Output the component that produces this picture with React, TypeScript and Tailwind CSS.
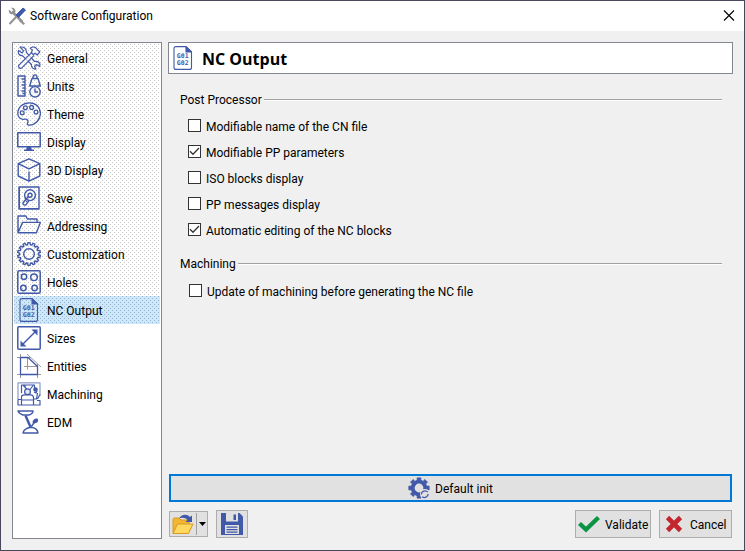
import React, { useState } from "react";

const BLUE = "#4159a9";

interface IconProps {
  children: React.ReactNode;
  width?: number;
}

const Icon: React.FC<IconProps> = ({ children, width = 1.3 }) => (
  <svg
    className="h-6 w-6 shrink-0"
    viewBox="0 0 24 24"
    fill="none"
    stroke={BLUE}
    strokeWidth={width}
    strokeLinejoin="round"
    aria-hidden="true"
  >
    {children}
  </svg>
);

const gearPath = (teeth: number, outer: number, inner: number, top = 0.2, base = 0.32) => {
  const points: string[] = [];
  const step = (Math.PI * 2) / teeth;
  for (let i = 0; i < teeth; i++) {
    const a = i * step - Math.PI / 2;
    [
      [-base, inner],
      [-top, outer],
      [top, outer],
      [base, inner],
    ].forEach(([t, r]) => {
      const x = 12 + Math.cos(a + t * step) * r;
      const y = 12 + Math.sin(a + t * step) * r;
      points.push(`${x.toFixed(2)} ${y.toFixed(2)}`);
    });
  }
  return `M${points.join("L")}Z`;
};

const GeneralIcon = () => (
  <Icon width={1.2}>
    <path d="M3 1.2 6.6 4.8 5.2 7 1.6 4.4C.6 7 2 9.8 5.4 9.6L14.5 18.5C14 21 16 23.5 19 23L17.5 20.5 19.5 18.5 22.5 20.5C24 17.5 21 14.5 17.5 15.5L9.2 6.2C9.8 2.6 6.6.4 3 1.2Z" />
    <path d="M13.2 2.2C16 .2 18.6.8 20 3.2l1.2 1.4 1.6 1.2-2.6 3.2-2-1.8-2 1.4-1.8-2.2L15.4 4ZM14.6 6.6 2 19.2c-1.6 1.6 1.2 4.2 2.8 2.6L17 9.4" fill="#fff" fillOpacity=".7" />
  </Icon>
);

const UnitsIcon = () => (
  <Icon width={1.4}>
    <path d="M1 2h7v20H1ZM4.5 5H8M5.5 8H8M4.5 11H8M5.5 14H8M4.5 17H8M5.5 19.5H8" />
    <path d="M15 4.5h6L23.3 12H12.7ZM16 4.5c-.8-4.8 4.8-4.8 4 0" />
    <circle cx="18" cy="17.8" r="5.2" fill="#f4f4f4" />
    <path d="M18 14.5V18h3" />
  </Icon>
);

const ThemeIcon = () => (
  <Icon>
    <path d="M12.5 23.2c-1.6.2-2.6-.8-1.8-2.6 1-2.2-.6-4-3.2-3.4C3.6 18 .8 15.4.8 11.4.8 5.4 6 .8 12.4.8S23.4 5 23.4 11.2c0 6.4-5 11.6-10.9 12Z" />
    <circle cx="5.2" cy="10.8" r="1.9" />
    <circle cx="8.4" cy="5.7" r="1.9" />
    <circle cx="14.6" cy="5.4" r="1.9" />
    <circle cx="19" cy="10" r="1.9" />
  </Icon>
);

const DisplayIcon = () => (
  <Icon width={1.5}>
    <path d="M.8 2.8h22.4v14H.8Z" />
    <path d="M10 17h4l.8 2.6H17v1.4H7v-1.4h2.2Z" fill={BLUE} stroke="none" />
  </Icon>
);

const CubeIcon = () => (
  <Icon width={1.4}>
    <path d="M12 .8 22.8 5.6V18L12 23.2 1.2 18V5.6ZM1.2 5.6 12 10.8l10.8-5.2M12 13.4V23" />
  </Icon>
);

const SaveIcon = () => (
  <Icon width={1.4}>
    <path d="M2 1h20v22H2Z" />
    <path d="M2.5 2v20.5h19" strokeWidth="1" />
    <circle cx="13" cy="9.2" r="5.4" />
    <circle cx="13" cy="9.2" r="2" />
    <path d="m11.5 10.6-5.4 5.8c-.8 1.6 1 3.4 2.8 2.4l3.4-5" />
    <path d="m8.2 14.4 2.4 2" strokeWidth="1" />
  </Icon>
);

const FolderIcon = () => (
  <Icon width={1.4}>
    <path d="M1 18.5V2h8l1.4 3H20v3M1 18.8 5.6 8.4h17.8L19.4 18.8H1Z" />
  </Icon>
);

const GearIcon = () => (
  <Icon width={1.4}>
    <path d={gearPath(14, 11.4, 9.4)} />
    <circle cx="12" cy="12" r="5.3" />
  </Icon>
);

const HolesIcon = () => (
  <Icon width={1.5}>
    <rect x=".8" y=".8" width="22.4" height="22.4" rx="1.5" />
    <circle cx="7" cy="6.8" r="2.7" />
    <circle cx="17" cy="7.2" r="3.3" />
    <circle cx="6.4" cy="18" r="2.7" />
    <circle cx="17.6" cy="18" r="2.7" />
  </Icon>
);

const NcIcon = () => (
  <Icon width={1.1}>
    <path d="M5 .6H15L20.5 6v15.4c0 1.2-.8 2-2 2H5c-1.2 0-2-.8-2-2V2.6c0-1.2.8-2 2-2Z" />
    <path d="M15 .6V6h5.5Z" fill={BLUE} />
    <text x="11.7" y="12" textAnchor="middle" fontSize="6.5" fontWeight="700" fill={BLUE} stroke="none" fontFamily="DejaVu Sans Mono, monospace">G01</text>
    <text x="11.7" y="19" textAnchor="middle" fontSize="6.5" fontWeight="700" fill={BLUE} stroke="none" fontFamily="DejaVu Sans Mono, monospace">G02</text>
  </Icon>
);

const SizesIcon = () => (
  <Icon width={1.5}>
    <rect x=".8" y=".8" width="22.4" height="22.4" rx="1" />
    <path d="M5 19 19 5" />
    <path d="M20.5 3.5v6L14.5 3.5ZM3.5 20.5v-6l6 6Z" fill={BLUE} stroke="none" />
  </Icon>
);

const EntitiesIcon = () => (
  <Icon>
    <path d="M0 3.5h14M3.5 0v24M0 20.5h24M20.5 10v14M10 0l14 13M10.5 3.5v12M7 12.5h13" stroke="#999" strokeWidth="1" />
    <path d="M3.5 3.5h7.5l9.5 9v8h-17Z" />
  </Icon>
);

const MachiningIcon = () => (
  <Icon width={1.2}>
    <path d="M1 17V.8h22V14" stroke="#8b99c9" />
    <path d="M4.5 11V3h13v3M6 3l4 4.5h3L16.5 3M8 3v3" />
    <circle cx="10.5" cy="9.8" r="2.9" fill="#e4e8f4" />
    <path d="M4.5 17.5H1V23h22v-4.5h-3M4.5 23v-8c0-1.5 1-2.2 3-2.2h6c2 0 3 1 3 3V23M4.5 18h12M17 17h2.5l1-6M23 12.5 20.5 17" />
    <circle cx="18.5" cy="7.5" r="1.7" fill={BLUE} />
    <path d="m17 10 2 1 1-2" />
  </Icon>
);

const EdmIcon = () => (
  <Icon width={1.4}>
    <path d="M1 1h15c0 1.6-1.8 3.2-4 4H6C3.6 4.2 1.6 2.6 1 1ZM6 23h15c-.4-3.4-3-5.4-7-5.8-4 .6-7.4 2.4-8 5.8Z" />
    <path d="m8.5 5.5 5 11.5" strokeWidth="2.4" />
    <path d="M20.5 8.5c1.4 2.4.2 4.4-2 4.5l-2.4 1-.4-1.4c-.6-2.2 2-4.4 4.8-4.1Z" fill={BLUE} stroke="none" />
    <path d="m18.6 10.5-4.2 6" />
  </Icon>
);

const items = [
  { label: "General", icon: GeneralIcon },
  { label: "Units", icon: UnitsIcon },
  { label: "Theme", icon: ThemeIcon },
  { label: "Display", icon: DisplayIcon },
  { label: "3D Display", icon: CubeIcon },
  { label: "Save", icon: SaveIcon },
  { label: "Addressing", icon: FolderIcon },
  { label: "Customization", icon: GearIcon },
  { label: "Holes", icon: HolesIcon },
  { label: "NC Output", icon: NcIcon },
  { label: "Sizes", icon: SizesIcon },
  { label: "Entities", icon: EntitiesIcon },
  { label: "Machining", icon: MachiningIcon },
  { label: "EDM", icon: EdmIcon },
];

const SHARED_COUNT = 10;

const dots =
  "bg-[conic-gradient(from_270deg_at_1px_1px,#00000038_25%,transparent_0),conic-gradient(from_270deg_at_1px_1px,#00000038_25%,transparent_0)] bg-size-[4px_4px] bg-position-[0_0,2px_2px]";

interface OptionProps {
  label: string;
  defaultChecked?: boolean;
}

const Option: React.FC<OptionProps> = ({ label, defaultChecked }) => (
  <label className="flex h-[26px] items-center gap-[5px]">
    <span className="grid h-[15px] items-start">
      <input
        type="checkbox"
        defaultChecked={defaultChecked}
        className="peer col-start-1 row-start-1 h-[13px] w-[13px] appearance-none border border-[#333] bg-white"
      />
      <svg
        className="pointer-events-none invisible col-start-1 row-start-1 h-[13px] w-[13px] peer-checked:visible"
        viewBox="0 0 13 13"
        fill="none"
        stroke="#333"
        strokeWidth="1.3"
        aria-hidden="true"
      >
        <path d="m2 6.2 3 3 6-6.2" />
      </svg>
    </span>
    <span className="pt-[2px]">{label}</span>
  </label>
);

interface GroupProps {
  title: string;
  children: React.ReactNode;
}

const Group: React.FC<GroupProps> = ({ title, children }) => (
  <fieldset>
    <legend className="flex h-5 w-full items-center gap-[2px]">
      {title}
      <span className="h-[2px] flex-1 border-t border-b border-t-[#a0a0a0] border-b-white" />
    </legend>
    {children}
  </fieldset>
);

const footerButton =
  "flex h-7 items-center border border-[#adadad] bg-[#e1e1e1] hover:border-[#0078d7] hover:bg-[#e5f1fb]";

export default function App() {
  const [selected, setSelected] = useState("NC Output");

  return (
    <div className="flex min-h-screen flex-col border border-[#4a475c] bg-[#f0f0f0] font-[Roboto,'Open_Sans',sans-serif] text-[12px] leading-4 text-black">
      <header className="flex h-[30px] items-center gap-1 bg-white pr-2 pl-[7px]">
        <svg className="h-[18px] w-[18px]" viewBox="0 0 18 18" fill="none" aria-hidden="true">
          <path d="M4 4.5 14.5 15" stroke="#929292" strokeWidth="2.6" />
          <path d="M1 2.5 3.6 5l1.8-1.8L3 .8c2.6-.8 5 1.4 4.4 4C6.6 7.4 3.4 8 1.8 6.4 .8 5.2.6 3.8 1 2.5Z" fill="#929292" />
          <path d="M12.5 12.5 17 16.5 15.5 18 11 14Z" fill="#929292" />
          <path d="M1.5 17 8.5 9.5" stroke="#929292" strokeWidth="2" />
          <path d="m8 8 7-7 2.5 2-7 7.5Z" fill={BLUE} stroke={BLUE} />
        </svg>
        <h1 className="flex-1">Software Configuration</h1>
        <button type="button" aria-label="Close" className="p-px">
          <svg className="h-3 w-3" viewBox="0 0 12 12" stroke="#000" strokeWidth="1.1" aria-hidden="true">
            <path d="m1 .5 10 10M11 .5 1 10.5" />
          </svg>
        </button>
      </header>

      <div className="flex flex-1 gap-[6px] p-[11px]">
        <nav className="w-[150px] shrink-0 border border-[#828790] bg-white p-px">
          <ul>
            {items.map(({ label, icon: ItemIcon }, index) => (
              <li
                key={label}
                className={`${label === selected ? "bg-[#cce8ff]" : "bg-white"} ${index < SHARED_COUNT ? dots : ""}`}
              >
                <button
                  type="button"
                  onClick={() => setSelected(label)}
                  className="flex h-7 w-full items-center gap-[6px] pl-[3px] text-left"
                >
                  <ItemIcon />
                  <span className="pt-[2px]">{label}</span>
                </button>
              </li>
            ))}
          </ul>
        </nav>

        <main className="mb-px flex min-w-0 flex-1 flex-col">
          <div className="flex h-8 items-center gap-[7px] border border-[#828790] bg-white pl-[2px]">
            <NcIcon />
            <h2 className="pt-[2px] font-['Open_Sans','Noto_Sans',sans-serif] text-[16px] leading-6 font-bold">NC Output</h2>
          </div>

          <div className="flex flex-1 flex-col gap-[11px] pt-4 pr-[11px] pl-3">
            <Group title="Post Processor">
              <div className="pt-[3px] pl-2">
                <Option label="Modifiable name of the CN file" />
                <Option label="Modifiable PP parameters" defaultChecked />
                <Option label="ISO blocks display" />
                <Option label="PP messages display" />
                <Option label="Automatic editing of the NC blocks" defaultChecked />
              </div>
            </Group>
            <Group title="Machining">
              <div className="pt-1 pl-[9px]">
                <Option label="Update of machining before generating the NC file" />
              </div>
            </Group>
          </div>

          <button
            type="button"
            className="mx-px mb-2 flex h-7 items-center justify-center gap-[5px] border-2 border-[#0078d7] bg-[#e1e1e1]"
          >
            <svg className="h-[22px] w-[22px]" viewBox="0 0 24 24" aria-hidden="true">
              <path d={gearPath(8, 11.2, 8.6, 0.24, 0.27)} fill={BLUE} stroke={BLUE} strokeLinejoin="round" />
              <circle cx="12" cy="12" r="4.8" fill="#e1e1e1" />
              <circle cx="18.5" cy="18.5" r="5.5" fill="#e1e1e1" />
              <path d="M14.5 19a4 4 0 0 1 7-2.5M22 18.5a4 4 0 0 1-6.5 3" fill="none" stroke={BLUE} strokeWidth="1.4" />
            </svg>
            <span className="pt-[2px]">Default init</span>
          </button>

          <div className="flex items-center gap-2 px-px">
            <div className="flex h-[26px] items-center border border-[#adadad] bg-[#e1e1e1]">
              <button type="button" aria-label="Open" className="px-[2px]">
                <svg className="h-[22px] w-[22px]" viewBox="0 0 22 22" aria-hidden="true">
                  <path d="M1 20.5V6.5l1-1.5h5l2 2h8v4" fill="#f2b632" stroke="#d59a22" />
                  <path d="M1 20.5 5.5 11H21l-4.5 9.5Z" fill="#ffd95f" stroke="#d59a22" strokeLinejoin="round" />
                  <path d="M7 5.5C9 1 15 .5 18 4l2-1.500V9h-6.500l2-2C13.500 4.500 10 4 7 5.500Z" fill={BLUE} />
                </svg>
              </button>
              <button type="button" aria-label="Open menu" className="flex h-[22px] w-[11px] items-center justify-center border-l border-[#a0a0a0]">
                <svg className="h-1 w-[7px]" viewBox="0 0 7 4" aria-hidden="true">
                  <path d="M0 0h7L3.500 4Z" />
                </svg>
              </button>
            </div>
            <button type="button" aria-label="Save" className={`${footerButton} mr-auto w-8 justify-center`}>
              <svg className="h-[22px] w-[22px]" viewBox="0 0 22 22" aria-hidden="true">
                <path d="M0 0h18.500L22 3.500V22H0Z" fill={BLUE} />
                <path d="M5 0h12v8.500H5ZM4 12h14v9H4Z" fill="#e1e1e1" />
                <path d="M12.500 1.500H15V7h-2.500ZM5.500 13.500h11v1.200h-11ZM5.500 16h11v1.200h-11ZM5.500 18.500h11v1.200h-11Z" fill={BLUE} />
              </svg>
            </button>
            <button type="button" className={`${footerButton} w-[76px] gap-[5px] pl-[2px]`}>
              <svg className="h-[22px] w-[22px] shrink-0" viewBox="0 0 22 22" aria-hidden="true">
                <path d="m1.5 10.500 6.500 6L20.500 4.500" fill="none" stroke="#0b9444" strokeWidth="4.400" />
              </svg>
              <span className="pt-[2px]">Validate</span>
            </button>
            <button type="button" className={`${footerButton} w-[73px] gap-[5px] pl-[3px]`}>
              <svg className="h-[22px] w-[22px] shrink-0" viewBox="0 0 22 22" aria-hidden="true">
                <path d="m4.500 4.500 13 13M17.500 4.500l-13 13" fill="none" stroke="#c4262e" strokeWidth="4.600" />
              </svg>
              <span className="pt-[2px]">Cancel</span>
            </button>
          </div>
        </main>
      </div>
    </div>
  );
}
